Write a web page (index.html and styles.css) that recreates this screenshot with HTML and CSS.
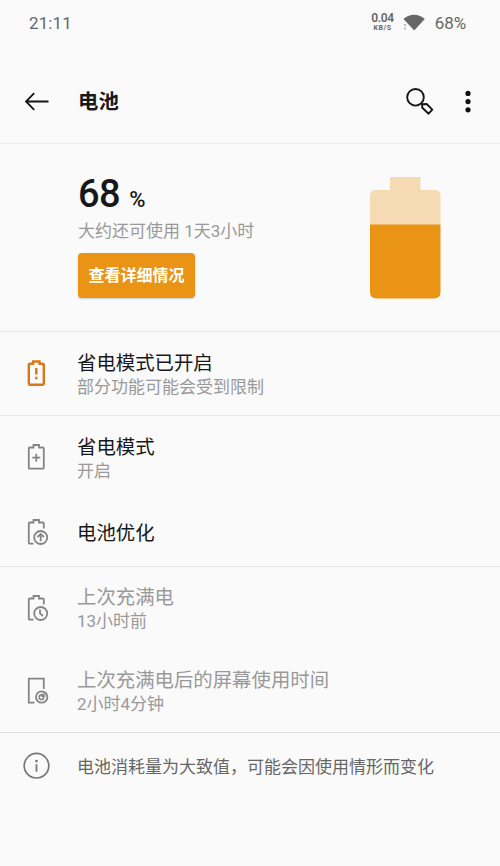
FILE: index.html
```html
<!DOCTYPE html>
<html lang="zh-CN">
<head>
<meta charset="utf-8">
<title>电池</title>
<link rel="stylesheet" href="styles.css">
</head>
<body>
<div class="status">
  <span class="clock">21:11</span>
  <div class="speed"><b>0.04</b><span>KB/S</span></div>
  <svg class="wifi" width="24" height="18" viewBox="0 0 24 18"><path d="M1.500 4.900Q12-3.200 22.800 4.900L12.200 16.600Z" fill="#666"/><path d="M3 10v2M3 13.500v2" stroke="#bbb" stroke-width="2"/></svg>
  <span class="level">68%</span>
</div>
<header class="appbar">
  <svg class="back" width="26" height="20" viewBox="0 0 26 20" fill="none" stroke="#151515" stroke-width="1.800"><path d="M24.500 9.500H2.300M10.200 1.200L2 9.500L10.200 17.800"/></svg>
  <h1>电池</h1>
  <svg class="search" width="30" height="30" viewBox="0 0 30 30" fill="none" stroke="#151515" stroke-width="1.900"><circle cx="10.500" cy="10.300" r="8.300"/><path d="M16.300 16.300L18 18M17 17.200L21.700 17L27.300 22.600L23.600 26.700L17.300 20.800Z" stroke-linejoin="round"/></svg>
  <svg class="more" width="8" height="24" viewBox="0 0 8 24" fill="#111"><circle cx="4" cy="3.400" r="2.600"/><circle cx="4" cy="11.600" r="2.600"/><circle cx="4" cy="19.800" r="2.600"/></svg>
</header>
<section class="summary">
  <div class="info">
    <div class="percent"><span class="num">68</span><span class="unit">%</span></div>
    <p class="estimate">大约还可使用 1天3小时</p>
    <button class="details">查看详细情况</button>
  </div>
  <svg class="battery" width="71" height="122" viewBox="0 0 71 122"><path d="M20 0H50.500V13H64.500Q70.500 13 70.500 19V48H0V19Q0 13 6 13H20Z" fill="#f5dab3"/><path d="M0 47.500H70.500V115Q70.500 121.500 64 121.500H6.500Q0 121.500 0 115Z" fill="#e99414"/></svg>
</section>
<section class="group">
  <div class="row">
    <svg class="icon" width="28" height="28" viewBox="0 0 28 28" fill="none" stroke="#d9771c" stroke-width="2.400"><path d="M6.800 4.800H10.200V2.500H16.500V4.800H19.300Q20.800 4.800 20.800 6.300V24.200Q20.800 25.700 19.300 25.700H7.300Q5.800 25.700 5.800 24.200V6.300Q5.800 4.800 7.300 4.800M13.300 9V15.500M13.300 17.800V20.200"/></svg>
    <div class="text"><h2>省电模式已开启</h2><p>部分功能可能会受到限制</p></div>
  </div>
</section>
<section class="group">
  <div class="row">
    <svg class="icon" width="28" height="28" viewBox="0 0 28 28" fill="none" stroke="#858585" stroke-width="1.800"><path d="M6.800 4.500H10.500V2H16V4.500H19.800Q20.800 4.500 20.800 5.500V24.700Q20.800 25.700 19.800 25.700H6.800Q5.800 25.700 5.800 24.700V5.500Q5.800 4.500 6.800 4.500M9.300 14.700H17.300M13.300 10.700V18.700"/></svg>
    <div class="text"><h2>省电模式</h2><p>开启</p></div>
  </div>
  <div class="row single">
    <svg class="icon" width="28" height="28" viewBox="0 0 28 28" fill="none" stroke="#858585" stroke-width="1.800"><path d="M10.500 25.700H6.800Q5.800 25.700 5.800 24.700V5.500Q5.800 4.500 6.800 4.500H10.500V2H16V4.500H19.800Q20.800 4.500 20.800 5.500V10.500"/><circle cx="17.700" cy="19.500" r="6.500"/><path d="M17.700 23.200V16.200M14.500 19L17.700 16L20.900 19"/></svg>
    <div class="text"><h2>电池优化</h2></div>
  </div>
</section>
<section class="group muted">
  <div class="row">
    <svg class="icon" width="28" height="28" viewBox="0 0 28 28" fill="none" stroke="#858585" stroke-width="1.800"><path d="M10.500 25.700H6.800Q5.800 25.700 5.800 24.700V5.500Q5.800 4.500 6.800 4.500H10.500V2H16V4.500H19.800Q20.800 4.500 20.800 5.500V10.500"/><circle cx="17.700" cy="19.500" r="6.500"/><path d="M17 15.500V19.300L20 22"/></svg>
    <div class="text"><h2>上次充满电</h2><p>13小时前</p></div>
  </div>
  <div class="row last">
    <svg class="icon" width="28" height="28" viewBox="0 0 28 28" fill="none" stroke="#858585" stroke-width="1.800"><path d="M11.500 25.700H5.800V1.700H20.800V12"/><circle cx="18.700" cy="20" r="5.700"/><circle cx="18.500" cy="20.200" r="2.300" stroke-width="1.600"/><path d="M18.700 20V14.300A5.700 5.700 0 0 1 24.400 20Z" fill="#858585" fill-opacity="0.350" stroke="none"/><path d="M18.700 20L21.800 17" stroke-width="1.400"/></svg>
    <div class="text"><h2>上次充满电后的屏幕使用时间</h2><p>2小时4分钟</p></div>
  </div>
</section>
<footer class="note">
  <svg class="icon" width="28" height="28" viewBox="0 0 28 28" fill="none" stroke="#777" stroke-width="1.700"><circle cx="13.500" cy="13.700" r="12.300"/><path d="M13.500 12.200V19.700" stroke-width="1.800"/><circle cx="13.500" cy="9.100" r="1.300" fill="#777" stroke="none"/></svg>
  <p>电池消耗量为大致值，可能会因使用情形而变化</p>
</footer>
</body>
</html>
```
FILE: styles.css
```css
* { box-sizing: border-box; margin: 0; padding: 0; }
body {
  width: 500px;
  height: 866px;
  background: #fafafa;
  color: #181818;
  font-family: Roboto, "Noto Sans CJK SC", sans-serif;
  overflow: hidden;
}
svg { display: block; flex: none; }
h1, h2, p { font-weight: 400; white-space: nowrap; }

.status {
  display: flex;
  align-items: center;
  height: 46px;
  padding: 0 34px 0 29px;
  color: #666;
}
.clock { font-size: 17px; letter-spacing: 0.1px; }
.speed {
  display: flex;
  flex-direction: column;
  align-items: center;
  margin-left: auto;
  padding-bottom: 2px;
}
.speed b { font-size: 12px; font-weight: 600; letter-spacing: -0.4px; line-height: 12px; }
.speed span { font-size: 7px; font-weight: 700; letter-spacing: 0.6px; line-height: 8px; }
.wifi { margin-left: 8px; margin-bottom: 1px; }
.level { margin-left: 9px; font-size: 17px; letter-spacing: -0.1px; }

.appbar {
  display: flex;
  align-items: center;
  height: 98px;
  padding: 14px 28px 0 24px;
  border-bottom: 1px solid #ececec;
}
.appbar h1 { margin-left: 28px; padding-top: 1px; font-size: 20.4px; font-weight: 700; line-height: 28px; }
.search { margin-left: auto; }
.more { margin-left: 29px; }

.summary {
  display: flex;
  justify-content: space-between;
  height: 187px;
  padding: 33px 59px 0 78px;
}
.percent { display: flex; align-items: baseline; height: 42px; line-height: 34px; font-weight: 500; }
.num { font-size: 38px; letter-spacing: -0.5px; }
.unit { margin-left: 9px; font-size: 22px; }
.estimate { font-size: 17px; line-height: 24px; color: #999; }
.details {
  display: block;
  width: 117px;
  height: 45px;
  margin-top: 10px;
  border: 0;
  border-radius: 4px;
  background: #e99414;
  color: #fff;
  font: 700 16px/45px Roboto, "Noto Sans CJK SC", sans-serif;
  box-shadow: 0 1px 2px rgba(0, 0, 0, 0.2);
}

.group { border-top: 1px solid #e6e6e6; }
.row { display: flex; align-items: center; height: 83px; padding: 0 22px 2px 23px; }
.row .text { margin-left: 26px; padding-top: 4px; }
.row h2 { font-size: 19.4px; line-height: 25px; }
.row p { font-size: 17px; line-height: 23px; color: #999; }
.single { height: 67px; padding-bottom: 1px; }
.single .text { padding-top: 2px; }
.last { height: 82px; padding-bottom: 1px; }
.muted .text { padding-top: 2px; }
.muted h2 { color: #999; }

.note {
  display: flex;
  align-items: center;
  height: 67px;
  padding: 0 23px;
  border-top: 1px solid #dedede;
}
.note p { margin-left: 26px; padding-bottom: 1px; font-size: 17px; color: #666; }
```
